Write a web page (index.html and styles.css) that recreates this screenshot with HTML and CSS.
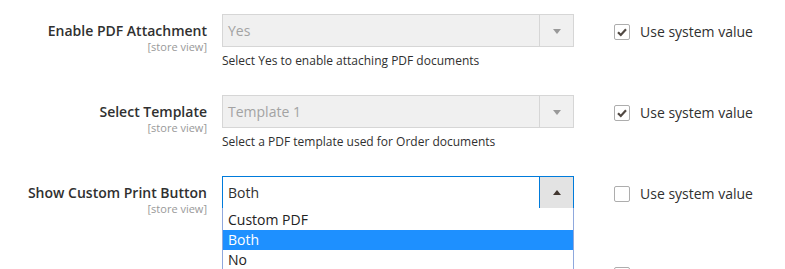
FILE: index.html
```html
<!DOCTYPE html>
<html lang="en">
<head>
    <meta charset="UTF-8">
    <title>PDF Settings</title>
    <link rel="stylesheet" href="styles.css">
</head>
<body>
    <div class="config">
        <div class="field">
            <label class="field-label">Enable PDF Attachment<span class="scope">[store view]</span></label>
            <div class="control">
                <div class="select disabled">
                    <span class="select-value">Yes</span>
                    <span class="select-arrow"><i class="tri down"></i></span>
                </div>
                <div class="note">Select Yes to enable attaching PDF documents</div>
            </div>
            <label class="use-default"><span class="check checked"><svg viewBox="0 0 16 16" width="16" height="16"><path d="M4 8.2 L6.8 11 L12 5.2" fill="none" stroke="#514943" stroke-width="2.2"/></svg></span>Use system value</label>
        </div>

        <div class="field">
            <label class="field-label">Select Template<span class="scope">[store view]</span></label>
            <div class="control">
                <div class="select disabled">
                    <span class="select-value">Template 1</span>
                    <span class="select-arrow"><i class="tri down"></i></span>
                </div>
                <div class="note">Select a PDF template used for Order documents</div>
            </div>
            <label class="use-default"><span class="check checked"><svg viewBox="0 0 16 16" width="16" height="16"><path d="M4 8.2 L6.8 11 L12 5.2" fill="none" stroke="#514943" stroke-width="2.2"/></svg></span>Use system value</label>
        </div>

        <div class="field">
            <label class="field-label">Show Custom Print Button<span class="scope">[store view]</span></label>
            <div class="control">
                <div class="select open">
                    <span class="select-value">Both</span>
                    <span class="select-arrow"><i class="tri up"></i></span>
                    <ul class="options">
                        <li>Custom PDF</li>
                        <li class="selected">Both</li>
                        <li>No</li>
                    </ul>
                </div>
            </div>
            <label class="use-default"><span class="check"></span>Use system value</label>
        </div>

        <div class="field">
            <label class="field-label"></label>
            <div class="control">
                <div class="select disabled"></div>
            </div>
            <label class="use-default"><span class="check"></span>Use system value</label>
        </div>
    </div>
</body>
</html>
```

FILE: styles.css
```css
body {
    margin: 0;
    font-family: 'Open Sans', 'Liberation Sans', sans-serif;
    color: #303030;
    background: #fff;
    overflow: hidden;
}

.config {
    padding-top: 14px;
}

.field {
    display: grid;
    grid-template-columns: 207px 352px auto;
    column-gap: 15px;
    align-items: start;
    height: 81px;
}

.field-label {
    text-align: right;
    font-size: 14px;
    font-weight: 600;
    line-height: 19px;
    padding-top: 7px;
}

.scope {
    display: block;
    font-size: 11px;
    font-weight: 400;
    line-height: 13px;
    color: #999;
}

.control {
    position: relative;
}

.select {
    position: relative;
    display: flex;
    height: 33px;
    box-sizing: border-box;
    border: 1px solid #adadad;
    background: #fff;
    font-size: 14px;
}

.select-value {
    flex: 1;
    padding-left: 5px;
    line-height: 31px;
}

.select-arrow {
    width: 33px;
    border-left: 1px solid #adadad;
    background: #e3e3e3;
    display: flex;
    align-items: center;
    justify-content: center;
}

.tri {
    width: 0;
    height: 0;
    border-left: 4px solid transparent;
    border-right: 4px solid transparent;
}

.tri.down {
    border-top: 5px solid #999;
    margin-top: 1px;
}

.tri.up {
    border-bottom: 5px solid #41362f;
}

.select.disabled {
    border-color: #d6d6d6;
    background: #f0f0f0;
    color: #a3a3a3;
}

.select.disabled .select-arrow {
    border-left-color: #d6d6d6;
    background: #f0f0f0;
}

.select.open {
    border-color: #007bdb;
}

.select.open .select-arrow {
    border-left-color: #007bdb;
}

.options {
    position: absolute;
    top: 100%;
    left: -1px;
    right: -1px;
    margin: 0;
    padding: 2px 0 0;
    list-style: none;
    background: #fff;
    border-left: 1px solid #8fa8dd;
    border-right: 1px solid #8fa8dd;
    z-index: 2;
    height: 80px;
}

.options li {
    height: 20px;
    line-height: 20px;
    padding-left: 5px;
    font-size: 14px;
    color: #222;
}

.options li.selected {
    background: #1e90ff;
    color: #fff;
}

.note {
    font-size: 12px;
    line-height: 18px;
    margin-top: 5px;
}

.use-default {
    display: flex;
    align-items: center;
    margin-left: 25px;
    margin-top: 10px;
    font-size: 14px;
    line-height: 16px;
    white-space: nowrap;
}

.check {
    width: 16px;
    height: 16px;
    box-sizing: border-box;
    border: 1px solid #adadad;
    border-radius: 2px;
    margin-right: 10px;
    display: flex;
    align-items: center;
    justify-content: center;
}

.check svg {
    margin: -1px;
}
```
